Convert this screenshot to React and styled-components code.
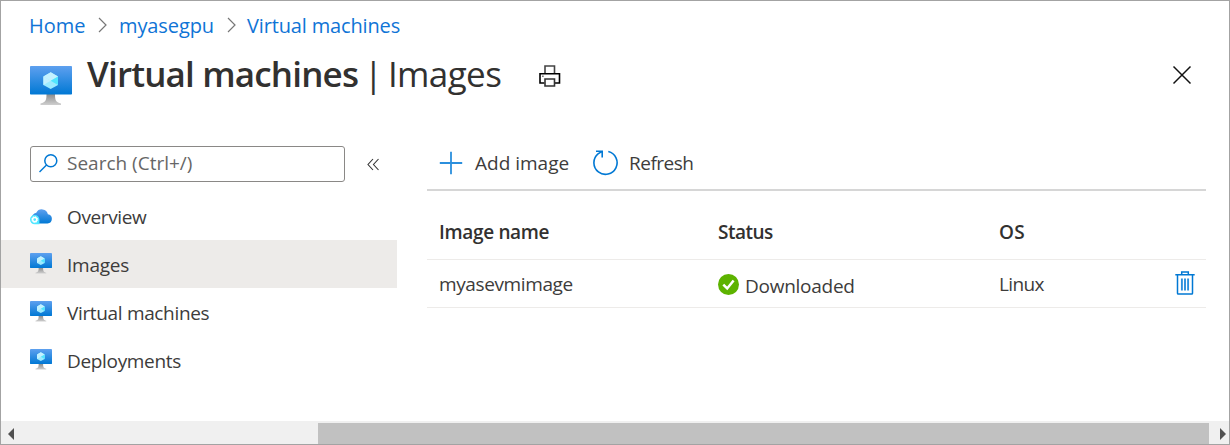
import React, { useId } from "react";
import styled, { createGlobalStyle } from "styled-components";

const GlobalStyle = createGlobalStyle`
  * { box-sizing: border-box; }
  body { margin: 0; background: #fff; }
`;

const Frame = styled.div`
  width: 1230px;
  height: 445px;
  border: 1px solid #a3a3a3;
  background: #fff;
  color: #3d3c3b;
  font: 400 19px/24px "Open Sans", "Noto Sans", sans-serif;
  display: flex;
  flex-direction: column;
  overflow: hidden;
`;

const Label = styled.span`
  letter-spacing: ${(p) => p.$track || 0}px;
  font-weight: ${(p) => p.$weight || 400};
  padding-top: ${(p) => p.$drop || 0}px;
  white-space: pre;
`;

const Breadcrumb = styled.nav`
  display: flex;
  align-items: center;
  height: 24px;
  margin: 12px 0 0 28px;
  flex: none;
  color: #0f74d6;
  font-size: 20px;
`;

const Crumb = styled.a`
  display: flex;
  width: ${(p) => p.$width}px;
  padding-top: 2px;
  white-space: nowrap;
`;

const Separator = styled.svg`
  width: 9px;
  height: 16px;
  flex: none;
  margin-right: ${(p) => p.$gap}px;
`;

const Header = styled.header`
  display: flex;
  align-items: center;
  height: 60px;
  margin: 9px 37px 0 29px;
  flex: none;
`;

const TitleIcon = styled.div`
  width: 42px;
  height: 41px;
  margin: 20px 15px 0 0;
  svg { display: block; }
`;

const Title = styled.h1`
  display: flex;
  align-items: center;
  margin: 0 0 5px;
  width: 452px;
  font: inherit;
  font-size: 35px;
  line-height: 48px;
  color: #323130;
  white-space: nowrap;
`;

const Divider = styled.span`
  margin: 0 5px 0 5.5px;
`;

const Close = styled.svg`
  width: 20px;
  height: 20px;
  margin: 0 0 2px auto;
`;

const Body = styled.div`
  flex: 1;
  display: flex;
  min-height: 0;
`;

const Sidebar = styled.aside`
  width: 396px;
  padding-top: 40px;
  flex: none;
`;

const SearchRow = styled.div`
  display: flex;
  align-items: center;
  margin: 0 0 10px 29px;
`;

const SearchBox = styled.div`
  width: 315px;
  height: 36px;
  border: 1px solid #8a8886;
  border-radius: 3px;
  display: flex;
  align-items: center;
  gap: 9px;
  padding: 0 0 2px 7px;
  color: #666;
`;

const Collapse = styled.svg`
  width: 12px;
  height: 13px;
  margin-left: 22px;
`;

const NavItem = styled.div`
  height: 48px;
  padding-left: 29px;
  display: flex;
  align-items: center;
  gap: 15px;
  background: ${(p) => (p.$active ? "#edebe9" : "transparent")};
  svg {
    flex: none;
    margin-bottom: 1px;
  }
`;

const Main = styled.main`
  flex: 1;
  margin: 34px 23px 0 30px;
`;

const Toolbar = styled.div`
  height: 51px;
  border-bottom: 2px solid #d6d6d6;
  display: flex;
  align-items: center;
  padding: 0 0 4px 12px;
`;

const Command = styled.div`
  display: flex;
  align-items: center;
  gap: ${(p) => p.$gap}px;
  width: ${(p) => p.$width}px;
`;

const Row = styled.div`
  display: grid;
  grid-template-columns: 279px 281px 176px 22px;
  align-items: center;
  padding-left: 12px;
  height: ${(p) => p.$height}px;
  border-bottom: 1px solid #edebe9;
  > svg { margin-bottom: 1px; }
`;

const HeadRow = styled(Row)`
  padding-top: 14px;
  color: #323130;
`;

const Status = styled.div`
  display: flex;
  align-items: center;
  gap: 6px;
  svg { margin-top: 1px; }
`;

const Scrollbar = styled.div`
  height: 23px;
  flex: none;
  background: #f0f0f0;
  display: flex;
  align-items: center;
  padding: 2px 0 0;
`;

const Arrow = styled.svg`
  width: 6px;
  height: 12px;
  margin: 0 0 0 ${(p) => p.$offset}px;
`;

const Thumb = styled.div`
  width: 891px;
  height: 21px;
  margin-left: 304px;
  background: #c1c1c1;
`;

function Monitor({ size }) {
  const id = useId();
  return (
    <svg width={size} height={Math.ceil(size * 0.95)} viewBox="0 0 42 40">
      <defs>
        <linearGradient id={id + "s"} x1="0" y1="0" x2="0" y2="1">
          <stop offset="0" stopColor="#5ea0ef" />
          <stop offset="1" stopColor="#0078d4" />
        </linearGradient>
        <linearGradient id={id + "t"} x1="0" y1="0" x2="0" y2="1">
          <stop offset="0" stopColor="#8c8c8c" />
          <stop offset="1" stopColor="#cfcfcf" />
        </linearGradient>
      </defs>
      <path d="M16.500 28h8.500c0 6 .5 8 6 9.500v1.500H10.500v-1.500c5.500-1.500 6-3.500 6-9.500z" fill={`url(#${id}t)`} />
      <rect width="42" height="28.500" rx="0.800" fill={`url(#${id}s)`} />
      <path d="M20.700 6.300l7.300 4.200v8.400l-7.300 4.200-7.300-4.200v-8.400z" fill="#9cebff" />
      <path d="M20.700 6.300l7.300 4.200-7.300 4.200-7.300-4.200z" fill="#c3f1ff" />
      <path d="M20.700 14.700l7.300-4.200v8.400z" fill="#50e6ff" />
      <path d="M20.700 14.700l-7.300-4.200v8.400z" fill="#c3f1ff" />
    </svg>
  );
}

function Cloud() {
  const id = useId();
  return (
    <svg width="22" height="18" viewBox="0 0 22 18">
      <defs>
        <linearGradient id={id} x1="0" y1="0" x2="0" y2="1">
          <stop offset="0" stopColor="#5ea0ef" />
          <stop offset="1" stopColor="#0078d4" />
        </linearGradient>
      </defs>
      <path d="M8 16.500h9.500a4.600 4.600 0 0 0 .4-9.150A6.200 6.200 0 0 0 6.300 5.700 5.400 5.400 0 0 0 8 16.500z" fill={`url(#${id})`} />
      <path d="M4.700 7.900a4.700 4.700 0 0 1 4.700 4.700v4.700H4.700a4.700 4.700 0 0 1 0-9.400z" fill="#50e6ff" />
      <circle cx="4.700" cy="12.600" r="2.100" fill="none" stroke="#fff" strokeWidth="1.500" />
      <circle cx="4.700" cy="12.600" r="3" fill="none" stroke="#fff" strokeWidth="0.900" strokeDasharray="1.180 1.180" />
    </svg>
  );
}

const SearchIcon = () => (
  <svg width="20" height="20" viewBox="0 0 20 20" fill="none" stroke="#0078d4" strokeWidth="1.500">
    <circle cx="12.800" cy="7.800" r="6" />
    <path d="M8.500 12L1.500 19" />
  </svg>
);

const PlusIcon = () => (
  <svg width="24" height="24" viewBox="0 0 24 24" stroke="#2b8fdd" strokeWidth="1.800">
    <path d="M12 .8v22.400M.8 12h22.400" />
  </svg>
);

const RefreshIcon = () => (
  <svg width="26" height="26" viewBox="0 0 26 26" fill="none" stroke="#0078d4" strokeWidth="1.600">
    <path d="M16.300 1.500A11.600 11.600 0 1 1 6 3.900L10 1.300M4 1.200h6.200v6.200" />
  </svg>
);

const PrintIcon = () => (
  <svg width="22" height="22" viewBox="0 0 22 22" fill="none" strokeWidth="1.600">
    <path d="M6 8.500V1h9.500v7.500" stroke="#444" />
    <path d="M5.500 18H1V8.800H20.500V18H16" stroke="#000" />
    <path d="M6 14h9.500v7H6z" stroke="#333" />
    <path d="M3.300 11.200h1.200" stroke="#444" />
  </svg>
);

const CheckIcon = () => (
  <svg width="21" height="21" viewBox="0 0 21 21">
    <circle cx="10.500" cy="10.500" r="10.500" fill="#5db300" />
    <path d="M5.300 10.600l3.900 3.900 6.400-8" fill="none" stroke="#fff" strokeWidth="2.500" />
  </svg>
);

const TrashIcon = () => (
  <svg width="20" height="24" viewBox="0 0 20 24" fill="none" stroke="#0078d4" strokeWidth="1.500">
    <path d="M.3 3.800h19.400M6.700 3.800V1h6.600v2.800M2.500 3.800v18.500q0 .8.800.8h13.400q.8 0 .8-.8V3.800" />
    <path d="M6.900 7.500v12M10 7.500v12M13.100 7.500v12" stroke="#2b8fdd" strokeWidth="1.900" />
  </svg>
);

export default function App() {
  return (
    <>
      <GlobalStyle />
      <Frame>
        <Breadcrumb>
          <Crumb $width={69}><Label>Home</Label></Crumb>
          <Separator $gap={12} viewBox="0 0 9 16"><path d="M1 1l7 7-7 7" fill="none" stroke="#777" strokeWidth="1.200" /></Separator>
          <Crumb $width={108}><Label $track={-0.1}>myasegpu</Label></Crumb>
          <Separator $gap={11} viewBox="0 0 9 16"><path d="M1 1l7 7-7 7" fill="none" stroke="#777" strokeWidth="1.200" /></Separator>
          <Crumb $width={160}><Label $track={-0.15}>Virtual machines</Label></Crumb>
        </Breadcrumb>
        <Header>
          <TitleIcon><Monitor size={42} /></TitleIcon>
          <Title>
            <Label $weight={600} $track={-0.83}>Virtual machines</Label>
            <Divider>|</Divider>
            <Label $track={-0.6}>Images</Label>
          </Title>
          <PrintIcon />
          <Close viewBox="0 0 20 20"><path d="M1.500 1.500l17 17M18.500 1.500l-17 17" stroke="#111" strokeWidth="1.500" /></Close>
        </Header>
        <Body>
          <Sidebar>
            <SearchRow>
              <SearchBox><SearchIcon /><Label>Search (Ctrl+/)</Label></SearchBox>
              <Collapse viewBox="0 0 12 13"><path d="M6 1L1 6.500 6 12M11.500 1l-5 5.500 5 5.500" fill="none" stroke="#333" strokeWidth="1.100" /></Collapse>
            </SearchRow>
            <NavItem><Cloud /><Label $drop={2} $track={-0.38}>Overview</Label></NavItem>
            <NavItem $active><Monitor size={22} /><Label $drop={2} $track={-0.25}>Images</Label></NavItem>
            <NavItem><Monitor size={22} /><Label $drop={2} $track={-0.34}>Virtual machines</Label></NavItem>
            <NavItem><Monitor size={22} /><Label $drop={2} $track={-0.33}>Deployments</Label></NavItem>
          </Sidebar>
          <Main>
            <Toolbar>
              <Command $gap={12} $width={153}><PlusIcon /><Label $drop={1}>Add image</Label></Command>
              <Command $gap={11} $width={110}><RefreshIcon /><Label $drop={1} $track={-0.5}>Refresh</Label></Command>
            </Toolbar>
            <HeadRow $height={69}>
              <Label $weight={600} $track={-0.33}>Image name</Label>
              <Label $weight={600} $track={-0.5}>Status</Label>
              <Label $weight={600} $track={0.2}>OS</Label>
            </HeadRow>
            <Row $height={48}>
              <Label $track={-0.38}>myasevmimage</Label>
              <Status><CheckIcon /><Label $drop={4} $track={-0.26}>Downloaded</Label></Status>
              <Label $track={-0.65}>Linux</Label>
              <TrashIcon />
            </Row>
          </Main>
        </Body>
        <Scrollbar>
          <Arrow $offset={7} viewBox="0 0 6 12"><path d="M6 0v12L0 6z" fill="#505050" /></Arrow>
          <Thumb />
          <Arrow $offset={11} viewBox="0 0 6 12"><path d="M0 0v12l6-6z" fill="#505050" /></Arrow>
        </Scrollbar>
      </Frame>
    </>
  );
}
